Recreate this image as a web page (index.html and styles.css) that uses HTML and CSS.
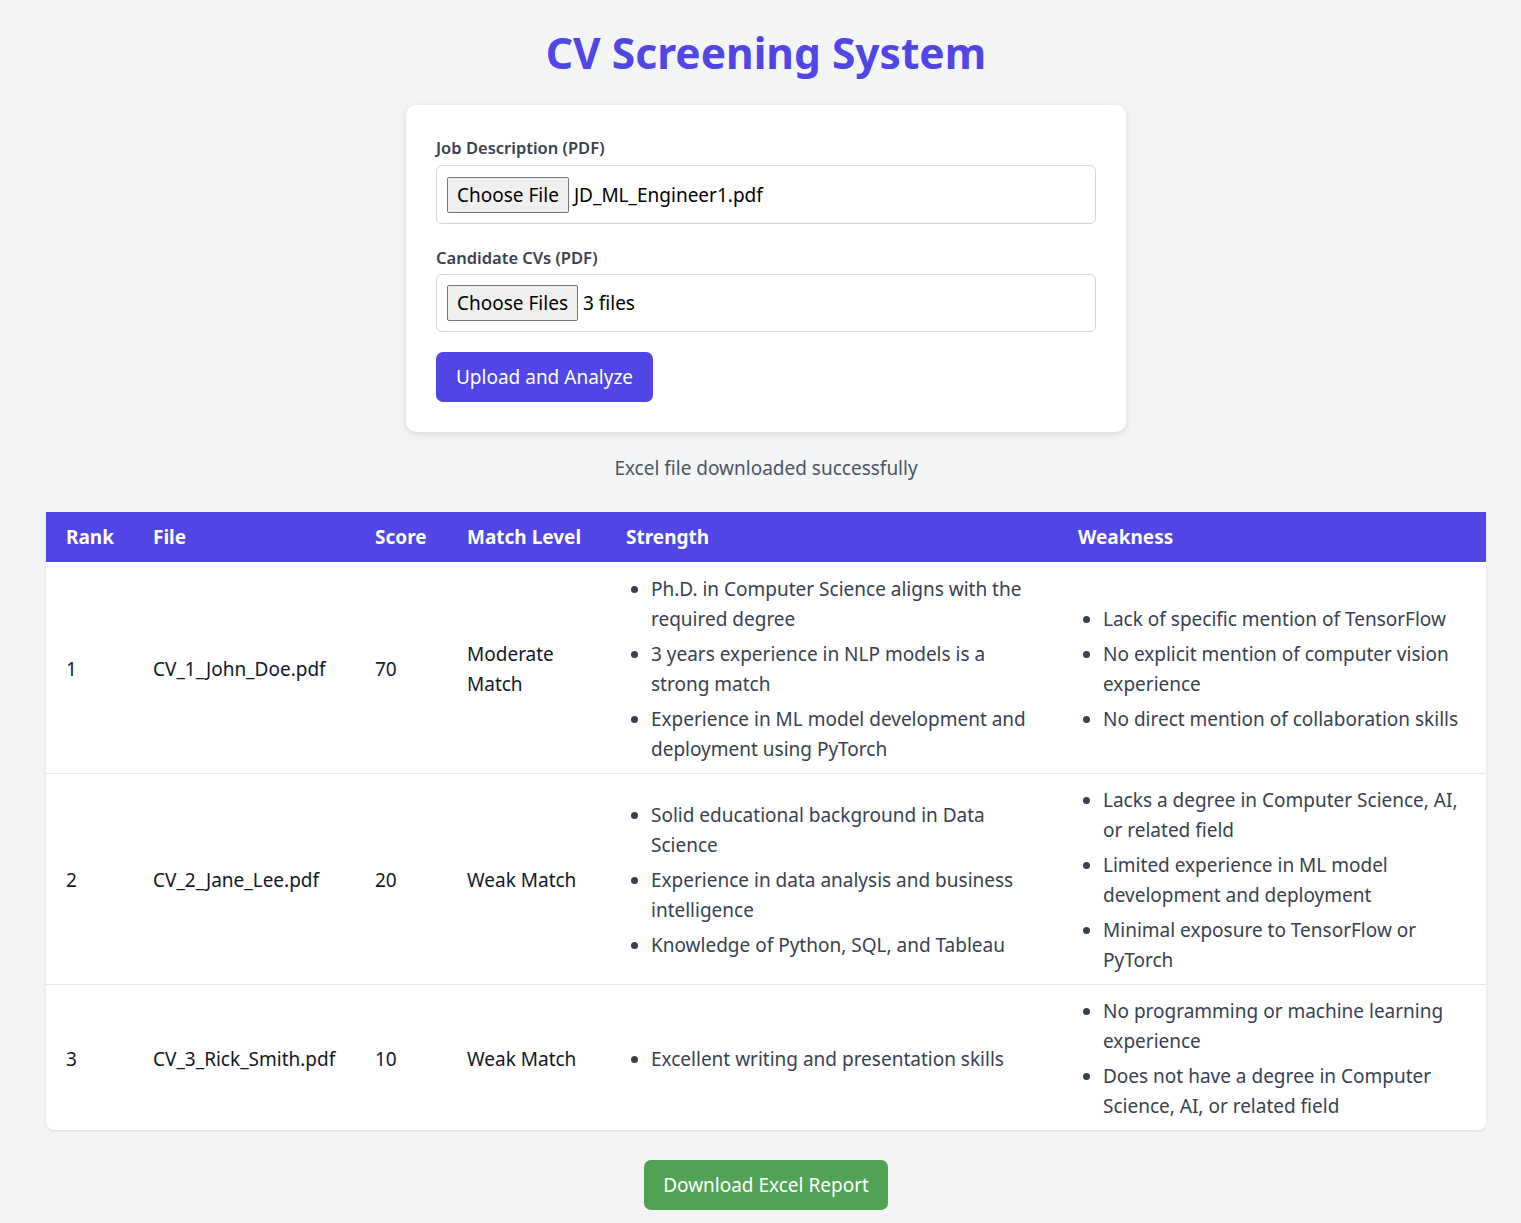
FILE: index.html
```html
<!DOCTYPE html>
<html lang="en">
<head>
<meta charset="utf-8">
<title>CV Screening System</title>
<link rel="stylesheet" href="styles.css">
</head>
<body>
<div class="page">
  <h1 class="title">CV Screening System</h1>

  <form class="card">
    <div class="field">
      <label class="label">Job Description (PDF)</label>
      <div class="file-input">
        <span class="file-btn">Choose File</span>
        <span class="file-name">JD_ML_Engineer1.pdf</span>
      </div>
    </div>
    <div class="field">
      <label class="label">Candidate CVs (PDF)</label>
      <div class="file-input">
        <span class="file-btn">Choose Files</span>
        <span class="file-name">3 files</span>
      </div>
    </div>
    <button type="button" class="btn btn-primary">Upload and Analyze</button>
  </form>

  <p class="status">Excel file downloaded successfully</p>

  <div class="table-wrap">
    <table class="results">
      <thead>
        <tr>
          <th class="c-rank">Rank</th>
          <th class="c-file">File</th>
          <th class="c-score">Score</th>
          <th class="c-match">Match Level</th>
          <th class="c-str">Strength</th>
          <th class="c-weak">Weakness</th>
        </tr>
      </thead>
      <tbody>
        <tr>
          <td>1</td>
          <td>CV_1_John_Doe.pdf</td>
          <td>70</td>
          <td>Moderate Match</td>
          <td><ul class="list">
            <li>Ph.D. in Computer Science aligns with the required degree</li>
            <li>3 years experience in NLP models is a strong match</li>
            <li>Experience in ML model development and deployment using PyTorch</li>
          </ul></td>
          <td><ul class="list">
            <li>Lack of specific mention of TensorFlow</li>
            <li>No explicit mention of computer vision experience</li>
            <li>No direct mention of collaboration skills</li>
          </ul></td>
        </tr>
        <tr>
          <td>2</td>
          <td>CV_2_Jane_Lee.pdf</td>
          <td>20</td>
          <td>Weak Match</td>
          <td><ul class="list">
            <li>Solid educational background in Data Science</li>
            <li>Experience in data analysis and business intelligence</li>
            <li>Knowledge of Python, SQL, and Tableau</li>
          </ul></td>
          <td><ul class="list">
            <li>Lacks a degree in Computer Science, AI, or related field</li>
            <li>Limited experience in ML model development and deployment</li>
            <li>Minimal exposure to TensorFlow or PyTorch</li>
          </ul></td>
        </tr>
        <tr>
          <td>3</td>
          <td>CV_3_Rick_Smith.pdf</td>
          <td>10</td>
          <td>Weak Match</td>
          <td><ul class="list">
            <li>Excellent writing and presentation skills</li>
          </ul></td>
          <td><ul class="list">
            <li>No programming or machine learning experience</li>
            <li>Does not have a degree in Computer Science, AI, or related field</li>
          </ul></td>
        </tr>
      </tbody>
    </table>
  </div>

  <div class="download-row">
    <button type="button" class="btn btn-success">Download Excel Report</button>
  </div>
</div>
</body>
</html>
```

FILE: styles.css
```css
* { box-sizing: border-box; }

html, body {
  margin: 0;
  padding: 0;
  background: #f3f4f6;
}

body {
  font-family: "Noto Sans", "Open Sans", sans-serif;
  font-size: 19px;
  line-height: 30px;
  color: #111827;
}

.page {
  width: 1440px;
  margin-left: 46px;
  padding: 20px 0 13px;
  display: flex;
  flex-direction: column;
  align-items: center;
}

.title {
  margin: 0 0 19px;
  font-size: 42.5px;
  line-height: 66px;
  font-weight: 700;
  color: #4f46e5;
}

.card {
  width: 720px;
  background: #ffffff;
  border-radius: 10px;
  box-shadow: 0 2px 6px rgba(0, 0, 0, 0.12);
  padding: 30px;
  display: flex;
  flex-direction: column;
  align-items: flex-start;
}

.field {
  width: 100%;
  margin-bottom: 20px;
}

.field:first-child { margin-bottom: 21px; }

.label {
  display: block;
  font-size: 16.5px;
  line-height: 26px;
  font-weight: 600;
  color: #374151;
  margin-bottom: 4px;
}

.field + .field .label { margin-bottom: 3px; }

.file-input {
  width: 100%;
  height: 59px;
  border: 1px solid #d1d5db;
  border-radius: 6px;
  padding: 0 10px;
  display: flex;
  align-items: center;
  gap: 5px;
  font-size: 19px;
  color: #000000;
  white-space: nowrap;
}

.field + .field .file-input { height: 58px; }

.file-btn {
  display: inline-flex;
  align-items: center;
  height: 36px;
  padding: 0 9px;
  background: #efefef;
  border: 1px solid #767676;
  border-radius: 2px;
  color: #000000;
}

.btn {
  border: none;
  border-radius: 7px;
  font-family: inherit;
  font-size: 19px;
  line-height: 30px;
  color: #ffffff;
  padding: 10px 0;
  white-space: nowrap;
  text-align: center;
  cursor: pointer;
}

.btn-primary {
  background: #4f46e5;
  width: 217px;
}

.btn-success {
  background: #52a255;
  width: 244px;
}

.status {
  margin: 21px 0 29px;
  font-size: 19px;
  line-height: 30px;
  color: #4b5563;
}

.table-wrap {
  width: 1440px;
  background: #ffffff;
  border-radius: 0 0 8px 8px;
  box-shadow: 0 1px 3px rgba(0, 0, 0, 0.1);
  overflow: hidden;
}

.results {
  width: 100%;
  border-collapse: collapse;
  table-layout: fixed;
}

.results th {
  background: #4f46e5;
  color: #ffffff;
  font-weight: 700;
  text-align: left;
  padding: 10px 20px;
  font-size: 19px;
  line-height: 30px;
}

.c-rank { width: 87px; }
.c-file { width: 222px; }
.c-score { width: 92px; }
.c-match { width: 159px; }
.c-str { width: 452px; }
.c-weak { width: 428px; }

.results td {
  padding: 11px 20px 9px;
  vertical-align: middle;
  border-top: 1px solid #e5e7eb;
  color: #111827;
}

.results tbody tr:first-child td {
  border-top: none;
  padding-top: 12px;
}

.list {
  margin: 0;
  padding-left: 25px;
  color: #374151;
}

.list li + li { margin-top: 5px; }

.download-row {
  margin-top: 30px;
  display: flex;
  justify-content: center;
}
```
